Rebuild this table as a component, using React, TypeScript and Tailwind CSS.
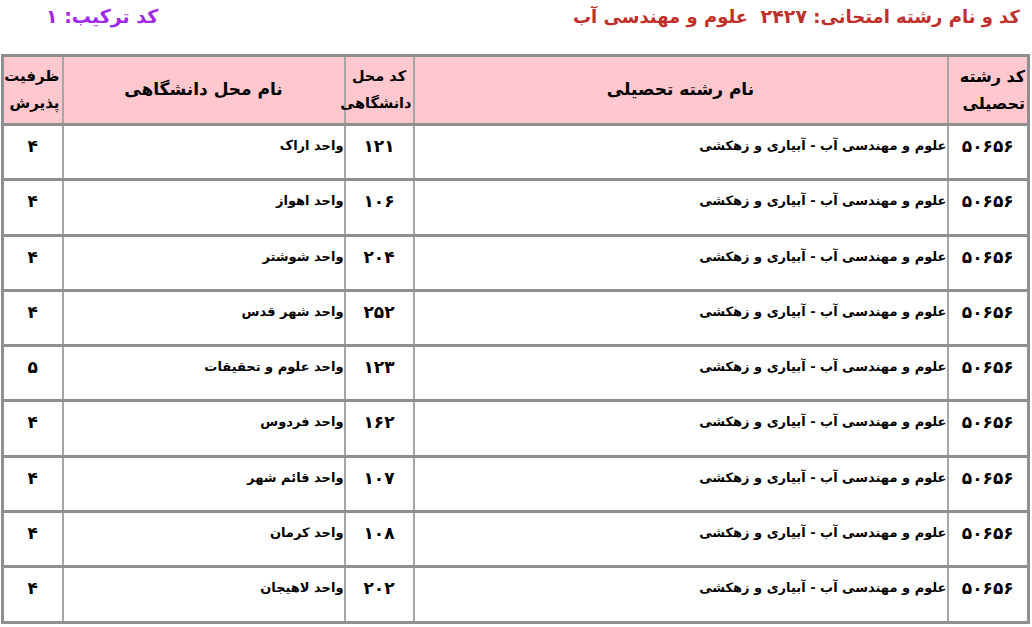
import React from "react"

const rows = [
  { code: "۱۲۱", name: "واحد اراک", cap: "۴" },
  { code: "۱۰۶", name: "واحد اهواز", cap: "۴" },
  { code: "۲۰۴", name: "واحد شوشتر", cap: "۴" },
  { code: "۲۵۲", name: "واحد شهر قدس", cap: "۴" },
  { code: "۱۲۳", name: "واحد علوم و تحقیقات", cap: "۵" },
  { code: "۱۶۲", name: "واحد فردوس", cap: "۴" },
  { code: "۱۰۷", name: "واحد قائم شهر", cap: "۴" },
  { code: "۱۰۸", name: "واحد کرمان", cap: "۴" },
  { code: "۲۰۲", name: "واحد لاهیجان", cap: "۴" },
]

const th = "bg-[#ffc7ce] border-x-2 border-[#a6a6a6] font-bold text-black"
const td = "border-x-2 border-[#a6a6a6] align-top font-bold text-black"

export default function App() {
  return (
    <div dir="rtl" className="w-[1032px] h-[627px] bg-white font-['DejaVu_Sans',sans-serif] overflow-hidden">
      {/* Title */}
      <div className="flex items-center justify-between h-[33px] pr-[12px] pl-[46px]">
        <h1 className="text-[18px] font-bold text-[#c0302b] leading-none">
          کد و نام رشته امتحانی: <span className="text-[19px]">۲۴۲۷</span>&nbsp;&nbsp;علوم و مهندسی آب
        </h1>
        <div className="text-[19px] font-bold text-[#a128e8] leading-none">کد ترکیب: ۱</div>
      </div>

      <div className="pt-[21px] pr-[2px] pl-[4px]">
        <table className="w-[1026px] border-collapse border-[3px] border-[#8f8f8f] table-fixed">
          <colgroup>
            <col className="w-[81px]" />
            <col className="w-[534px]" />
            <col className="w-[69px]" />
            <col className="w-[282px]" />
            <col className="w-[60px]" />
          </colgroup>
          <thead>
            <tr className="h-[69px] border-b-[3px] border-[#8f8f8f]">
              <th className={`${th} text-right text-[16px] px-[2px] leading-[27px]`}>کد رشته<br />تحصیلی</th>
              <th className={`${th} text-center text-[17px]`}>نام رشته تحصیلی</th>
              <th className={`${th} text-right text-[14.5px] px-[1px] leading-[27px]`}>
                <div className="text-center">کد محل</div>
                <div>دانشگاهی</div>
              </th>
              <th className={`${th} text-center text-[17px]`}>نام محل دانشگاهی</th>
              <th className={`${th} text-right text-[15px] px-[2px] leading-[27px]`}>ظرفیت<br />پذیرش</th>
            </tr>
          </thead>
          <tbody>
            {rows.map((r) => (
              <tr key={r.code} className="h-[55.3px] border-b-[3px] border-[#8f8f8f]">
                <td className={`${td} text-center text-[17px] pt-[8px]`}>۵۰۶۵۶</td>
                <td className={`${td} text-right text-[13px] pt-[10px]`}>علوم و مهندسی آب - آبیاری و زهکشی</td>
                <td className={`${td} text-center text-[17px] pt-[8px]`}>{r.code}</td>
                <td className={`${td} text-right text-[13px] pt-[10px]`}>{r.name}</td>
                <td className={`${td} text-center text-[17px] pt-[8px]`}>{r.cap}</td>
              </tr>
            ))}
          </tbody>
        </table>
      </div>
    </div>
  )
}
